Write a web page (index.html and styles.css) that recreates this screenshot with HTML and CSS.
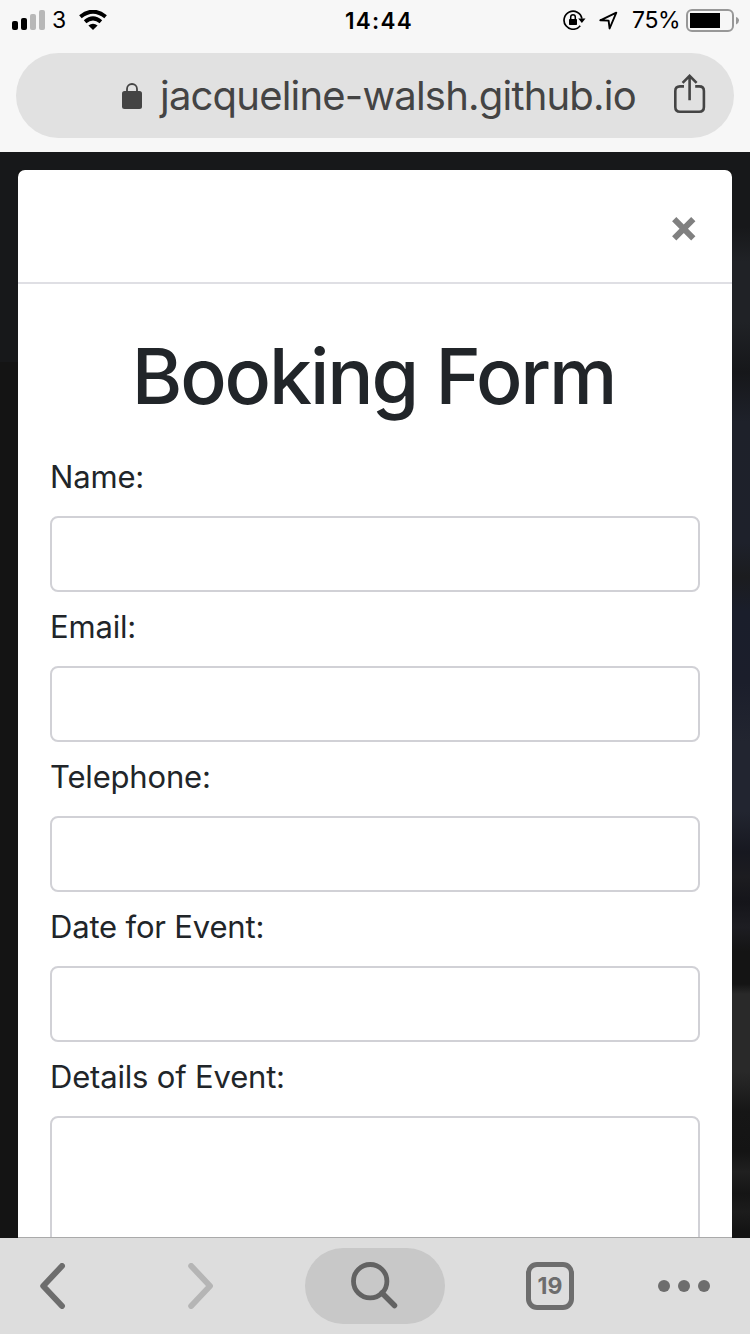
FILE: index.html
```html
<!DOCTYPE html>
<html lang="en">
<head>
<meta charset="utf-8">
<title>Booking Form</title>
<link rel="stylesheet" href="styles.css">
</head>
<body>
<div class="screen">
  <header class="browser-top">
    <div class="status">
      <div class="status-left">
        <svg class="signal" width="34" height="22" viewBox="0 0 34 22"><g><rect x="0" y="12" width="6" height="9" rx="2"/><rect x="9" y="9" width="6" height="12" rx="2"/></g><g fill="#b8b8b8"><rect x="18" y="5" width="6" height="16" rx="2"/><rect x="27" y="1" width="6" height="20" rx="2"/></g></svg>
        <span class="carrier">3</span>
        <svg class="wifi" width="28" height="20" viewBox="0 0 28 20"><g fill="none" stroke="#000" stroke-width="4"><path d="M1.4 6.8Q14-3.4 26.6 6.8"/><path d="M6.1 11.7Q14 5.1 21.9 11.7"/></g><path d="M9.4 15.6Q14 11.7 18.6 15.6L14 20Z"/></svg>
      </div>
      <span class="time">14:44</span>
      <div class="status-right">
        <svg class="rotation" width="23" height="20" viewBox="0 0 23 20"><path d="M17.2 15.7A9 9 0 1 1 18.9 8.6" fill="none" stroke="#000" stroke-width="1.7"/><path d="M15.2 8.6H22.5L18.9 13Z"/><rect x="6" y="9" width="8" height="6" rx=".7"/><path d="M7.7 9V7a2.3 2.3 0 0 1 4.6 0V9" fill="none" stroke="#000" stroke-width="1.5"/></svg>
        <svg class="location" width="19" height="19" viewBox="0 0 19 19"><path d="M1.3 9.3L17.3 1.7L10.6 17.5L9.6 9.6Z" fill="none" stroke="#000" stroke-width="1.9" stroke-linejoin="round"/></svg>
        <span class="percent">75%</span>
        <svg class="battery" width="54" height="24" viewBox="0 0 54 24"><rect x="1" y="1" width="46" height="21" rx="5" fill="none" stroke="#989898" stroke-width="2"/><rect x="4" y="4" width="30" height="15"/><path d="M50 8Q53 9 53 11.5Q53 14 50 15.5Z" fill="#989898"/></svg>
      </div>
    </div>
    <div class="address">
      <svg class="lock" width="20" height="27" viewBox="0 0 20 27"><rect x="0" y="8" width="20" height="18" rx="2.5" fill="#444"/><path d="M5 9V6a5 5 0 0 1 10 0V9" fill="none" stroke="#444" stroke-width="1.8"/></svg>
      <span class="url">jacqueline-walsh.github.io</span>
      <svg class="share" width="32" height="40" viewBox="0 0 32 40" fill="none" stroke="#444" stroke-width="2.6"><path d="M10 12.4H6Q1.3 12.4 1.3 17V33Q1.3 37.7 6 37.7H25.2Q29.9 37.7 29.9 33V17Q29.9 12.4 25.2 12.4H21.2"/><path d="M15.6 26.3V2M8.6 8.8L15.6 1.8L22.6 8.8"/></svg>
    </div>
  </header>
  <main class="page">
    <section class="modal">
      <div class="modal-header">
        <svg width="24" height="24" viewBox="0 0 24 24"><path d="M2.2 2.2L21.3 21.3M21.3 2.2L2.2 21.3" stroke="#808080" stroke-width="6"/></svg>
      </div>
      <form class="modal-body">
        <h1 class="title">Booking Form</h1>
        <label class="label">Name:</label>
        <div class="field"></div>
        <label class="label">Email:</label>
        <div class="field"></div>
        <label class="label">Telephone:</label>
        <div class="field"></div>
        <label class="label">Date for Event:</label>
        <div class="field"></div>
        <label class="label">Details of Event:</label>
        <div class="field field-tall"></div>
      </form>
    </section>
  </main>
  <nav class="toolbar">
    <svg class="back" width="26" height="46" viewBox="0 0 26 46"><path d="M22 3L3.2 23L22 43" fill="none" stroke="#6d6d6d" stroke-width="5.9" stroke-linecap="round" stroke-linejoin="round"/></svg>
    <svg class="forward" width="26" height="46" viewBox="0 0 26 46"><path d="M3.2 3L22 23L3.2 43" fill="none" stroke="#b5b5b5" stroke-width="5.9" stroke-linecap="round" stroke-linejoin="round"/></svg>
    <div class="search"><svg width="47" height="47" viewBox="0 0 47 47" fill="none" stroke="#626262" stroke-width="4.8"><circle cx="19.2" cy="19.2" r="16.7"/><path d="M31 31L43.5 43.5" stroke-width="5.5" stroke-linecap="round"/></svg></div>
    <div class="tabs">19</div>
    <div class="more"><i></i><i></i><i></i></div>
  </nav>
</div>
</body>
</html>
```
FILE: styles.css
```css
* { box-sizing: border-box; }
body { margin: 0; font-family: Inter, "Liberation Sans", sans-serif; }
svg { display: block; flex: none; }
.screen { width: 750px; height: 1334px; display: flex; flex-direction: column; overflow: hidden; }
.browser-top { height: 152px; flex: none; background: #f7f7f7; }
.status { height: 40px; display: grid; grid-template-columns: 1fr 72px 1fr; padding: 0 10px 0 12px; color: #000; line-height: 41px; white-space: nowrap; }
.status-left, .status-right { display: flex; align-items: flex-start; }
.signal { margin-top: 9px; }
.carrier { font-size: 23px; margin-left: 6px; width: 15px; }
.wifi { margin: 10px 0 0 12px; }
.time { font-size: 22.5px; font-weight: 600; text-align: center; letter-spacing: 1.3px; padding-left: 5px; }
.status-right { justify-content: flex-end; }
.rotation { margin-top: 10px; }
.location { margin: 11px 0 0 13px; }
.percent { font-size: 23px; margin-left: 14px; width: 48px; letter-spacing: -.4px; }
.battery { margin: 9px 0 0 6px; }
.address { height: 85px; margin: 13px 16px 0; border-radius: 43px; background: #e1e1e1; display: flex; align-items: flex-start; padding-left: 106px; }
.lock { margin-top: 30px; }
.url { width: 478px; margin: 13px 0 0 18px; font-size: 40px; line-height: 60px; letter-spacing: -.8px; color: #444; white-space: nowrap; }
.share { margin: 21px 0 0 36px; }
.page { flex: 1; min-height: 0; overflow: hidden; padding: 18px 18px 0; background: linear-gradient(#17181a, #17181a) 0 0 / 18px 210px no-repeat, linear-gradient(#17181a, #17181a) 0 0 / 732px 18px no-repeat, linear-gradient(#17181a 0, #17181a 75px, #202226 110px, #202226 170px, #16171a 220px, #1e212a 270px, #1e212b 390px, #1b1c1f 425px, #1a1e2b 460px, #1b1e2b 530px, #222530 590px, #222530 660px, #171820 700px, #1c1c20 725px, #15151a 750px, #1d1d22 775px, #141414 800px, #141414 832px, #292929 842px, #292929 920px, #161616 960px, #141414 1000px, #202020 1020px, #151515 1042px, #1c1c1c 1060px, #131313 1080px) 100% 0 / 18px 100% no-repeat, #141414; }
.modal { height: 100%; background: #fff; border-radius: 7px 7px 0 0; border-bottom: 1px solid #aaa; overflow: hidden; }
.modal-header { height: 114px; border-bottom: 2px solid #dfdfe4; display: flex; justify-content: flex-end; padding: 47px 36px 0 0; }
.modal-body { padding: 44px 32px 0; color: #212529; }
.title { margin: 0 0 29px; font-size: 77px; font-weight: 500; line-height: 96px; letter-spacing: -2.1px; text-indent: -3px; text-align: center; white-space: nowrap; }
.label { display: block; font-size: 31px; line-height: 48px; letter-spacing: -.18px; margin-bottom: 15px; white-space: nowrap; }
.field { height: 76px; border: 2px solid #d1d1d6; border-radius: 8px; margin-bottom: 11px; }
.field-tall { height: 180px; }
.toolbar { height: 96px; flex: none; background: #ddd; display: flex; align-items: flex-start; }
.back { margin: 25px 0 0 40px; }
.forward { margin: 25px 0 0 122px; }
.search { width: 140px; height: 76px; margin: 10px 0 0 91px; border-radius: 38px; background: #c8c8c8; padding: 14px 0 0 46px; }
.tabs { width: 48px; height: 48px; margin: 24px 0 0 81px; border: 5px solid #6d6d6d; border-radius: 11px; color: #6d6d6d; font-size: 23px; font-weight: 700; line-height: 38px; text-align: center; }
.more { display: flex; gap: 8px; margin: 42px 0 0 84px; }
.more i { width: 12px; height: 12px; border-radius: 50%; background: #6d6d6d; }
```
